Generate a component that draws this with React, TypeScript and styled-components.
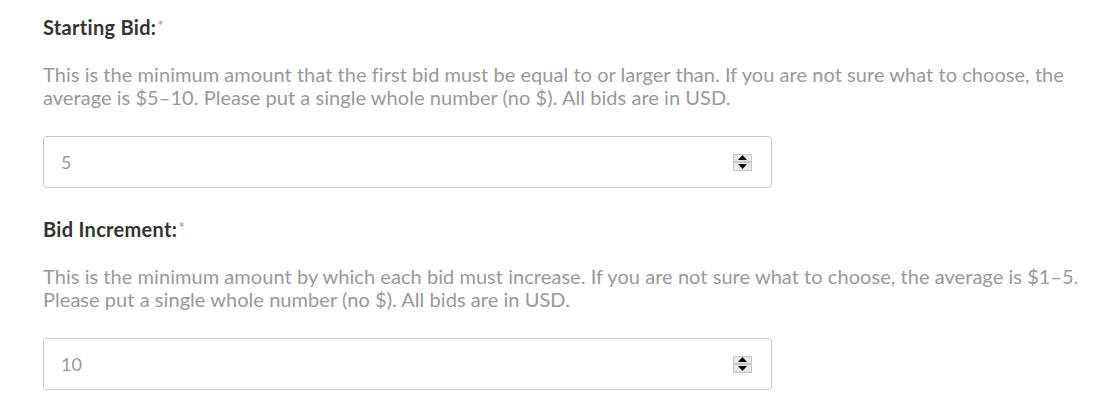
import React, { useState } from "react";
import styled, { createGlobalStyle } from "styled-components";

const GlobalStyle = createGlobalStyle`
  html, body {
    margin: 0;
    padding: 0;
    background: #fff;
  }
  body {
    font-family: Lato, "Open Sans", sans-serif;
  }
`;

const Form = styled.div`
  padding: 14px 18px 0 43px;
  display: flex;
  flex-direction: column;
`;

const Field = styled.div`
  display: flex;
  flex-direction: column;
  margin-bottom: 28px;
`;

const Label = styled.label`
  font-size: 20px;
  font-weight: 700;
  letter-spacing: 0.3px;
  color: #333;
  line-height: 26px;
  margin-bottom: 23px;
`;

const Required = styled.span`
  font-size: 16px;
  font-weight: 400;
  color: #999;
  vertical-align: top;
  position: relative;
  top: -2px;
  margin-left: 1px;
`;

const Help = styled.p`
  margin: 0 0 27px;
  font-size: 20px;
  letter-spacing: 0.05px;
  line-height: 23px;
  color: #999;
`;

const InputBox = styled.div`
  width: 729px;
  height: 52px;
  box-sizing: border-box;
  border: 1px solid #ccc;
  border-radius: 4px;
  display: flex;
  align-items: center;
  padding: 0 19px 0 17px;
`;

const Value = styled.input`
  flex: 1;
  border: none;
  outline: none;
  font-family: Lato, "Open Sans", sans-serif;
  font-size: 18px;
  color: #999;
  background: transparent;
  padding: 0;
`;

const Spinner = styled.div`
  width: 19px;
  height: 17px;
  box-sizing: border-box;
  border: 1px solid #c8c8c8;
  background: #e8e8e8;
  display: flex;
  flex-direction: column;
`;

const SpinHalf = styled.button<{ $down?: boolean }>`
  flex: 1;
  border: none;
  padding: 0;
  margin: 0;
  background: transparent;
  display: flex;
  align-items: center;
  justify-content: center;
  cursor: pointer;
  ${(p) => (p.$down ? "border-top: 2px solid #c8c8c8;" : "")}
`;

const Arrow = ({ down }: { down?: boolean }) => (
  <svg width="9" height="5" viewBox="0 0 9 5">
    {down ? <polygon points="0,0 9,0 4.5,5" fill="#000" /> : <polygon points="0,5 9,5 4.5,0" fill="#000" />}
  </svg>
);

const NumberField = ({ initial }: { initial: number }) => {
  const [val, setVal] = useState(String(initial));
  return (
    <InputBox>
      <Value value={val} onChange={(e) => setVal(e.target.value)} />
      <Spinner>
        <SpinHalf onClick={() => setVal(String((parseInt(val) || 0) + 1))}>
          <Arrow />
        </SpinHalf>
        <SpinHalf $down onClick={() => setVal(String((parseInt(val) || 0) - 1))}>
          <Arrow down />
        </SpinHalf>
      </Spinner>
    </InputBox>
  );
};

const App = () => {
  return (
    <Form>
      <GlobalStyle />
      <Field>
        <Label>
          Starting Bid:<Required>*</Required>
        </Label>
        <Help>
          This is the minimum amount that the first bid must be equal to or larger than. If you are not sure what to
          choose, the average is $5–10. Please put a single whole number (no $). All bids are in USD.
        </Help>
        <NumberField initial={5} />
      </Field>
      <Field>
        <Label>
          Bid Increment:<Required>*</Required>
        </Label>
        <Help>
          This is the minimum amount by which each bid must increase. If you are not sure what to choose, the average is
          $1–5. Please put a single whole number (no $). All bids are in USD.
        </Help>
        <NumberField initial={10} />
      </Field>
    </Form>
  );
};

export default App;
